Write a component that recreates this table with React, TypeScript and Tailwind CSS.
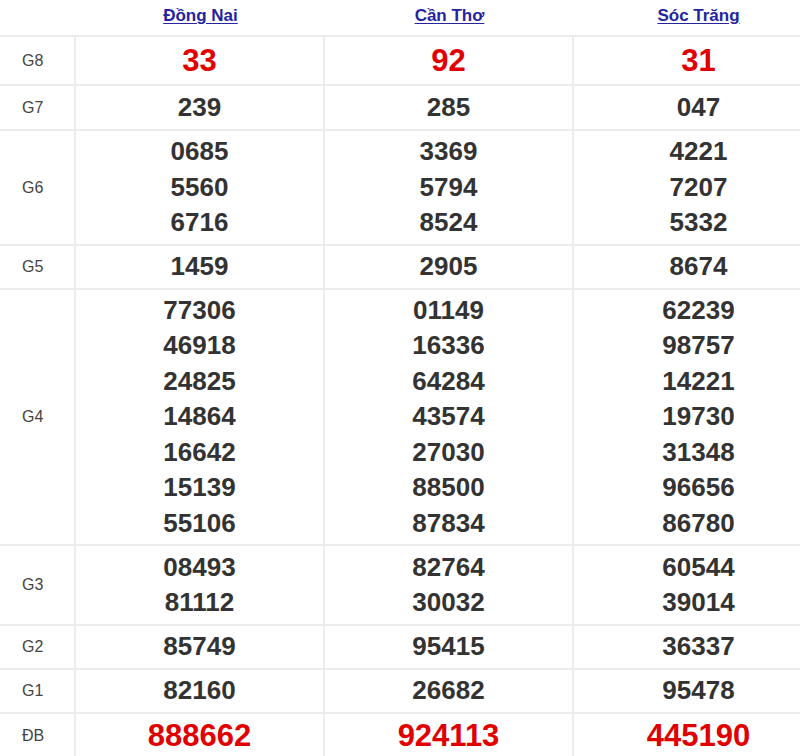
import React from "react";

type Row = { label: string; h: number; red?: boolean; vals: string[][] };

const rows: Row[] = [
  { label: "G8", h: 49, red: true, vals: [["33"], ["92"], ["31"]] },
  { label: "G7", h: 45, vals: [["239"], ["285"], ["047"]] },
  {
    label: "G6",
    h: 115,
    vals: [
      ["0685", "5560", "6716"],
      ["3369", "5794", "8524"],
      ["4221", "7207", "5332"],
    ],
  },
  { label: "G5", h: 44, vals: [["1459"], ["2905"], ["8674"]] },
  {
    label: "G4",
    h: 256,
    vals: [
      ["77306", "46918", "24825", "14864", "16642", "15139", "55106"],
      ["01149", "16336", "64284", "43574", "27030", "88500", "87834"],
      ["62239", "98757", "14221", "19730", "31348", "96656", "86780"],
    ],
  },
  {
    label: "G3",
    h: 80,
    vals: [
      ["08493", "81112"],
      ["82764", "30032"],
      ["60544", "39014"],
    ],
  },
  { label: "G2", h: 44, vals: [["85749"], ["95415"], ["36337"]] },
  { label: "G1", h: 44, vals: [["82160"], ["26682"], ["95478"]] },
  { label: "ĐB", h: 46, red: true, vals: [["888662"], ["924113"], ["445190"]] },
];

const provinces = ["Đồng Nai", "Cần Thơ", "Sóc Trăng"];

export default function App() {
  return (
    <div
      className="w-[800px] h-[756px] overflow-hidden bg-white"
      style={{ fontFamily: '"Liberation Sans", Arial, sans-serif' }}
    >
      <div className="w-[823px]">
        <div className="grid grid-cols-[76px_249px_249px_249px] h-[37px] border-b-2 border-[#ececec]">
          <div />
          {provinces.map((p) => (
            <div key={p} className="flex items-center justify-center pb-[3px]">
              <a className="text-[17px] font-bold text-[#2424a0] underline underline-offset-2">
                {p}
              </a>
            </div>
          ))}
        </div>
        {rows.map((r) => (
          <div
            key={r.label}
            className="grid grid-cols-[76px_249px_249px_249px] border-b-2 border-[#ececec]"
            style={{ height: r.h }}
          >
            <div className="flex items-center pl-[22px] border-r-2 border-[#ececec] text-[16px] text-[#444]">
              {r.label}
            </div>
            {r.vals.map((col, i) => (
              <div
                key={i}
                className={
                  "flex flex-col items-center justify-center font-bold " +
                  (i < 2 ? "border-r-2 border-[#ececec] " : "") +
                  (r.red
                    ? "text-[31px] text-[#e00000] leading-[35.5px]"
                    : "text-[26px] text-[#333] leading-[35.5px]")
                }
              >
                {col.map((v) => (
                  <div key={v}>{v}</div>
                ))}
              </div>
            ))}
          </div>
        ))}
      </div>
    </div>
  );
}
